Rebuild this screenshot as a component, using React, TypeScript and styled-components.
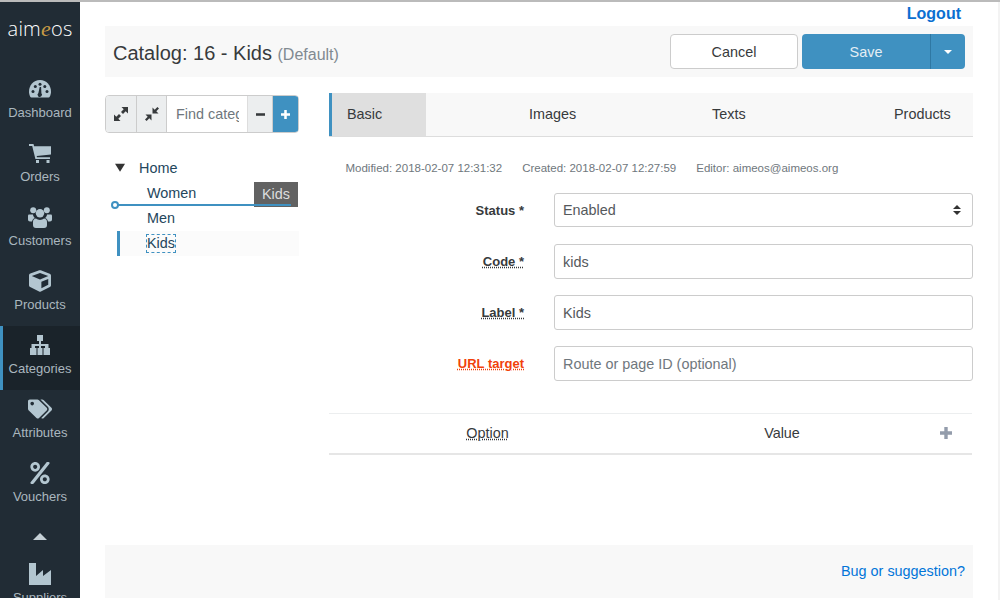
import type { ReactNode } from "react";
import { createGlobalStyle, styled } from "styled-components";
import { FaCube, FaPercent, FaTags } from "react-icons/fa";

const GlobalStyle = createGlobalStyle`
  html, body {
    margin: 0;
    height: 600px;
    overflow: hidden;
    background: #fff;
    font-family: "Liberation Sans", Arial, sans-serif;
  }
`;

const Page = styled.div`
  width: 1000px;
  height: 600px;
  display: flex;
  overflow: hidden;
  border-top: 2px solid #bbb;
  box-sizing: border-box;
`;

const Sidebar = styled.nav`
  width: 80px;
  height: 596px;
  flex: none;
  background: #212c35;
  overflow: hidden;
`;

const Logo = styled.div`
  height: 68px;
  padding-top: 15px;
  box-sizing: border-box;
  text-align: center;
  color: #fff;
  font-family: "Open Sans", sans-serif;
  font-size: 20px;
  line-height: 24px;
  font-weight: 300;
  letter-spacing: 0.2px;

  em {
    color: #c69a45;
    font-family: "Liberation Serif", serif;
    font-size: 22px;
  }
`;

const NavItem = styled.div<{ $active?: boolean }>`
  height: 64px;
  box-sizing: border-box;
  display: flex;
  flex-direction: column;
  align-items: center;
  padding-top: 8px;
  color: #aab7bf;
  font-size: 13px;
  line-height: 16px;
  gap: 5px;
  background: ${(p) => (p.$active ? "#1a232a" : "transparent")};
  border-left: ${(p) => (p.$active ? "3px solid #3f91c1" : "none")};
  padding-right: ${(p) => (p.$active ? "3px" : "0")};

  svg {
    width: 24px;
    height: 22px;
    flex: none;
    color: #b3c6d0;
  }
`;

const ScrollUp = styled.div`
  height: 37px;
  display: flex;
  justify-content: center;
  align-items: center;

  &::before {
    content: "";
    border-left: 7px solid transparent;
    border-right: 7px solid transparent;
    border-bottom: 7px solid #c5d0d6;
  }
`;

const Main = styled.main`
  flex: 1;
  padding: 0 25px 0 25px;
  display: flex;
  flex-direction: column;
  min-width: 0;
`;

const ScrollTrack = styled.div`
  width: 2px;
  flex: none;
  background: #f3f3f3;
`;

const LogoutRow = styled.div`
  height: 24px;
  display: flex;
  justify-content: flex-end;
  padding: 3px 12px 0 0;
  box-sizing: border-box;
`;

const Logout = styled.a`
  color: #0b6fd1;
  font-weight: 700;
  font-size: 16px;
  line-height: 18px;
`;

const HeaderBar = styled.header`
  height: 51px;
  background: #f8f8f8;
  display: flex;
  align-items: center;
  justify-content: space-between;
  padding: 0 8px;
`;

const Title = styled.h1`
  margin: 4px 0 0;
  font-size: 20px;
  font-weight: 400;
  color: #373a3c;

  small {
    font-size: 16px;
    color: #818a91;
  }
`;

const Actions = styled.div`
  display: flex;
  gap: 4px;
`;

const Cancel = styled.button`
  width: 128px;
  height: 35px;
  background: #fff;
  border: 1px solid #ccc;
  border-radius: 4px;
  font: inherit;
  font-size: 14.4px;
  color: #373a3c;
`;

const SaveGroup = styled.div`
  display: flex;
  height: 35px;
  border-radius: 4px;
  overflow: hidden;
  background: #3f91c1;
  color: #e4eef4;
  font-size: 14.4px;
`;

const SaveLabel = styled.div`
  width: 128px;
  display: flex;
  align-items: center;
  justify-content: center;
`;

const SaveCaret = styled.div`
  width: 34px;
  border-left: 1px solid #2f78a3;
  display: flex;
  align-items: center;
  justify-content: center;

  &::before {
    content: "";
    border-left: 4.5px solid transparent;
    border-right: 4.5px solid transparent;
    border-top: 4.5px solid #fff;
  }
`;

const Body = styled.div`
  display: flex;
  gap: 30px;
  margin-top: 16px;
  height: 452px;
`;

const TreeColumn = styled.aside`
  width: 194px;
  flex: none;
`;

const TreeToolbar = styled.div`
  display: flex;
  height: 38px;
  box-sizing: border-box;
  border: 1px solid #ccc;
  border-radius: 4px;
  overflow: hidden;
  margin-top: 2px;
`;

const ToolButton = styled.div<{ $primary?: boolean; $width: number; $icon: number }>`
  width: ${(p) => p.$width}px;
  flex: none;
  box-sizing: border-box;
  display: flex;
  align-items: center;
  justify-content: center;
  background: ${(p) => (p.$primary ? "#3f91c1" : "#eceeef")};
  color: ${(p) => (p.$primary ? "#fff" : "#373a3c")};
  border-right: 1px solid ${(p) => (p.$primary ? "#3f91c1" : "#ccc")};

  svg {
    width: ${(p) => p.$icon}px;
    height: ${(p) => p.$icon}px;
  }
`;

const FindBox = styled.div`
  flex: 1;
  min-width: 0;
  display: flex;
  align-items: center;
  padding: 0 8px 0 9px;
  overflow: hidden;
  white-space: nowrap;
  border-right: 1px solid #ddd;
  color: #6f777d;
  font-size: 14.4px;
`;

const FindText = styled.span`
  display: block;
  overflow: hidden;
`;

const Tree = styled.ul`
  position: relative;
  list-style: none;
  margin: 22px 0 0;
  padding: 0;
  font-size: 14.4px;
  color: #24465c;
`;

const TreeRow = styled.li<{ $selected?: boolean; $root?: boolean }>`
  height: 25px;
  box-sizing: border-box;
  display: flex;
  align-items: center;
  margin: ${(p) => (p.$selected ? "1px" : "0")} 0 0 12px;
  padding-left: ${(p) => (p.$root ? "0" : "27px")};
  border-left: 3px solid ${(p) => (p.$selected ? "#3f91c1" : "transparent")};
  background: ${(p) => (p.$selected ? "#fbfbfb" : "transparent")};
  gap: 14px;
`;

const Arrow = styled.span`
  width: 10px;
  height: 10px;
  margin-left: -5px;
  background: #333;
  clip-path: polygon(0 12%, 100% 12%, 50% 92%);
`;

const Focused = styled.span`
  outline: 1px dashed #3f91c1;
  line-height: 17px;
`;

const DropLine = styled.div`
  position: absolute;
  left: 10px;
  right: 8px;
  top: 49px;
  height: 2px;
  background: #3f91c1;

  &::before {
    content: "";
    position: absolute;
    left: -4px;
    top: -3px;
    width: 4px;
    height: 4px;
    border: 2px solid #3f91c1;
    border-radius: 50%;
    background: #fff;
  }
`;

const DragGhost = styled.div`
  position: absolute;
  right: 1px;
  top: 27px;
  width: 44px;
  height: 25px;
  background: rgba(70, 70, 70, 0.85);
  color: #ddd;
  font-size: 14.4px;
  line-height: 25px;
  text-align: center;
`;

const Content = styled.section`
  flex: 1;
  min-width: 0;
`;

const Tabs = styled.div`
  height: 43px;
  display: flex;
  background: #f8f8f8;
  border-bottom: 1px solid #ddd;
  font-size: 14.4px;
  color: #373a3c;
`;

const Tab = styled.div<{ $active?: boolean; $width: number; $inset: number }>`
  width: ${(p) => p.$width}px;
  flex: none;
  display: flex;
  align-items: center;
  box-sizing: border-box;
  padding: 0 0 2px ${(p) => p.$inset}px;
  background: ${(p) => (p.$active ? "#dfdfdf" : "transparent")};
  border-left: ${(p) => (p.$active ? "3px solid #3f91c1" : "none")};
`;

const Meta = styled.div`
  display: flex;
  gap: 20px;
  margin: 24px 0 0 16.5px;
  font-size: 11.5px;
  line-height: 14px;
  color: #6f777d;
`;

const Form = styled.div`
  margin-top: 18px;
  display: flex;
  flex-direction: column;
  gap: 16px;
`;

const Field = styled.div`
  display: flex;
  align-items: flex-start;
  height: 35px;
  gap: 30px;
`;

const Label = styled.label<{ $help?: boolean; $warn?: boolean }>`
  width: 195px;
  text-align: right;
  font-size: 13px;
  line-height: 36px;
  font-weight: 700;
  color: ${(p) => (p.$warn ? "#f1410b" : "#373a3c")};
  text-decoration: ${(p) => (p.$help ? "underline dotted" : "none")};
`;

const Input = styled.div<{ $placeholder?: boolean; $short?: boolean }>`
  flex: 1;
  height: ${(p) => (p.$short ? 34 : 35)}px;
  box-sizing: border-box;
  border: 1px solid #ccc;
  border-radius: 3px;
  padding: 0 8px;
  display: flex;
  align-items: center;
  justify-content: space-between;
  font-size: 14.4px;
  color: ${(p) => (p.$placeholder ? "#6f777d" : "#55595c")};
`;

const SelectArrows = styled.span`
  display: flex;
  flex-direction: column;
  gap: 2px;
  margin-right: 3px;

  &::before,
  &::after {
    content: "";
    border-left: 4.5px solid transparent;
    border-right: 4.5px solid transparent;
  }

  &::before {
    border-bottom: 4.5px solid #333;
  }

  &::after {
    border-top: 4.5px solid #333;
  }
`;

const OptionTable = styled.div`
  margin: 32px 1px 0 0;
  height: 42px;
  padding-bottom: 1px;
  box-sizing: border-box;
  border-top: 1px solid #eceeef;
  border-bottom: 2px solid #e6e6e6;
  display: flex;
  align-items: center;
  font-size: 14.4px;
  color: #373a3c;
`;

const OptionHead = styled.div<{ $width: number; $help?: boolean }>`
  width: ${(p) => p.$width}px;
  flex: none;
  text-align: center;
  text-decoration: ${(p) => (p.$help ? "underline dotted" : "none")};
`;

const AddOption = styled.div`
  flex: 1;
  display: flex;
  justify-content: center;
  color: #939cab;

  svg {
    width: 12px;
    height: 12px;
    margin: -1px 0 0 2px;
  }
`;

const Footer = styled.footer`
  height: 53px;
  padding: 0 8px 2px 0;
  box-sizing: border-box;
  background: #f8f8f8;
  display: flex;
  align-items: center;
  justify-content: flex-end;
`;

const FooterLink = styled.a`
  color: #0275d8;
  font-size: 14.4px;
`;

const DashboardIcon = () => (
  <svg viewBox="0 0 24 20">
    <path
      fill="currentColor"
      d="M12 1C5.400 1 1 6.400 1 12.500c0 2 .5 3.800 1.400 5.400.2.300.5.500.9.500h17.400c.4 0 .7-.2.9-.5.9-1.600 1.400-3.400 1.400-5.400C23 6.400 18.600 1 12 1z"
    />
    <g fill="#212c35">
      <circle cx="5" cy="12.500" r="1.500" />
      <circle cx="7.300" cy="7.500" r="1.500" />
      <circle cx="12" cy="5.300" r="1.500" />
      <circle cx="19" cy="12.500" r="1.500" />
      <circle cx="16.800" cy="7.500" r="1.500" />
      <path d="M11.700 8 10.400 14a2.200 2.200 0 1 0 3 .2L13.100 8z" />
    </g>
  </svg>
);

const CartIcon = () => (
  <svg viewBox="0 0 24 20">
    <path
      fill="currentColor"
      d="M1 1h4.500l.6 2.200H23v8.300l-14.300 1.500.3 1.200h13v1.800H7.400L4.200 2.900H1zM8 17h3v3H8zM18.500 17h3v3h-3z"
    />
  </svg>
);

const UsersIcon = () => (
  <svg viewBox="0 0 24 22">
    <g fill="currentColor">
      <circle cx="5.200" cy="4.200" r="3" />
      <circle cx="18.800" cy="4.200" r="3" />
      <circle cx="12" cy="7.200" r="4.200" />
      <path d="M1 8.400h4c.2 1.600.9 2.800 2 3.700-1.600.7-2.600 1.800-3 3.300H2c-1.200 0-2-.8-2-2V10c0-1 .4-1.600 1-1.600zM23 8.400h-4c-.2 1.600-.9 2.800-2 3.700 1.600.7 2.600 1.800 3 3.300h2c1.200 0 2-.8 2-2V10c0-1-.4-1.600-1-1.600zM8 12.500c1 .9 2.400 1.400 4 1.400s3-.5 4-1.400c1.800 0 3 1.500 3 3.500v3c0 1.700-1 3-3 3H8c-2 0-3-1.300-3-3v-3c0-2 1.200-3.500 3-3.500z" />
    </g>
  </svg>
);

const SitemapIcon = () => (
  <svg viewBox="0 0 24 20">
    <path
      fill="currentColor"
      d="M9 0h6v6h-2v3h7.500v4H22v7h-6.500v-7h1.500v-2H13v2h1.500v7h-5v-7H11v-2H7v2h1.500v7H2v-7h1.500V9H11V6H9z"
    />
  </svg>
);

const IndustryIcon = () => (
  <svg viewBox="0 0 24 22">
    <path fill="currentColor" d="M1 0h7v13l7-6v6l8-6v15H1z" />
  </svg>
);

const ExpandIcon = () => (
  <svg viewBox="0 0 16 16">
    <path
      fill="currentColor"
      d="M8.500 1H15v6.500l-2.300-2.300L10 8 8 6l2.700-2.700zM7.500 15H1V8.500l2.300 2.300L6 8l2 2-2.700 2.700z"
    />
  </svg>
);

const CompressIcon = () => (
  <svg viewBox="0 0 16 16">
    <path
      fill="currentColor"
      d="M8.500 1.500v6h6l-2.200-2.200L15 2.600 13.400 1 10.700 3.700zM7.500 14.500v-6h-6l2.200 2.200L1 13.400 2.600 15l2.700-2.700z"
    />
  </svg>
);

const PlusIcon = () => (
  <svg viewBox="0 0 12 12">
    <path fill="currentColor" d="M4.300 0h3.400v4.300H12v3.400H7.700V12H4.300V7.700H0V4.300h4.300z" />
  </svg>
);

const MinusIcon = () => (
  <svg viewBox="0 0 12 12">
    <rect fill="currentColor" y="4.300" width="12" height="3.400" />
  </svg>
);

const navItems: { label: string; icon: ReactNode; active?: boolean }[] = [
  { label: "Dashboard", icon: <DashboardIcon /> },
  { label: "Orders", icon: <CartIcon /> },
  { label: "Customers", icon: <UsersIcon /> },
  { label: "Products", icon: <FaCube /> },
  { label: "Categories", icon: <SitemapIcon />, active: true },
  { label: "Attributes", icon: <FaTags /> },
  { label: "Vouchers", icon: <FaPercent /> },
];

export default function App() {
  return (
    <Page>
      <GlobalStyle />
      <Sidebar>
        <Logo>
          aim<em>e</em>os
        </Logo>
        {navItems.map(({ label, icon, active }) => (
          <NavItem key={label} $active={active}>
            {icon}
            {label}
          </NavItem>
        ))}
        <ScrollUp />
        <NavItem>
          <IndustryIcon />
          Suppliers
        </NavItem>
      </Sidebar>
      <Main>
        <LogoutRow>
          <Logout>Logout</Logout>
        </LogoutRow>
        <HeaderBar>
          <Title>
            Catalog: 16 - Kids <small>(Default)</small>
          </Title>
          <Actions>
            <Cancel>Cancel</Cancel>
            <SaveGroup>
              <SaveLabel>Save</SaveLabel>
              <SaveCaret />
            </SaveGroup>
          </Actions>
        </HeaderBar>
        <Body>
          <TreeColumn>
            <TreeToolbar>
              <ToolButton $width={31} $icon={16}>
                <ExpandIcon />
              </ToolButton>
              <ToolButton $width={30} $icon={16}>
                <CompressIcon />
              </ToolButton>
              <FindBox>
                <FindText>Find categ</FindText>
              </FindBox>
              <ToolButton $width={25} $icon={9}>
                <MinusIcon />
              </ToolButton>
              <ToolButton $primary $width={25} $icon={9}>
                <PlusIcon />
              </ToolButton>
            </TreeToolbar>
            <Tree>
              <TreeRow $root>
                <Arrow />
                Home
              </TreeRow>
              <TreeRow>Women</TreeRow>
              <TreeRow>Men</TreeRow>
              <TreeRow $selected>
                <Focused>Kids</Focused>
              </TreeRow>
              <DragGhost>Kids</DragGhost>
              <DropLine />
            </Tree>
          </TreeColumn>
          <Content>
            <Tabs>
              <Tab $active $width={97} $inset={15}>Basic</Tab>
              <Tab $width={183} $inset={103}>Images</Tab>
              <Tab $width={182} $inset={103}>Texts</Tab>
              <Tab $width={180} $inset={103}>Products</Tab>
            </Tabs>
            <Meta>
              <span>Modified: 2018-02-07 12:31:32</span>
              <span>Created: 2018-02-07 12:27:59</span>
              <span>Editor: aimeos@aimeos.org</span>
            </Meta>
            <Form>
              <Field>
                <Label>Status *</Label>
                <Input $short>
                  Enabled
                  <SelectArrows />
                </Input>
              </Field>
              <Field>
                <Label $help>Code *</Label>
                <Input>kids</Input>
              </Field>
              <Field>
                <Label $help>Label *</Label>
                <Input>Kids</Input>
              </Field>
              <Field>
                <Label $help $warn>URL target</Label>
                <Input $placeholder>Route or page ID (optional)</Input>
              </Field>
            </Form>
            <OptionTable>
              <OptionHead $width={317} $help>Option</OptionHead>
              <OptionHead $width={272}>Value</OptionHead>
              <AddOption>
                <PlusIcon />
              </AddOption>
            </OptionTable>
          </Content>
        </Body>
        <Footer>
          <FooterLink>Bug or suggestion?</FooterLink>
        </Footer>
      </Main>
      <ScrollTrack />
    </Page>
  );
}
